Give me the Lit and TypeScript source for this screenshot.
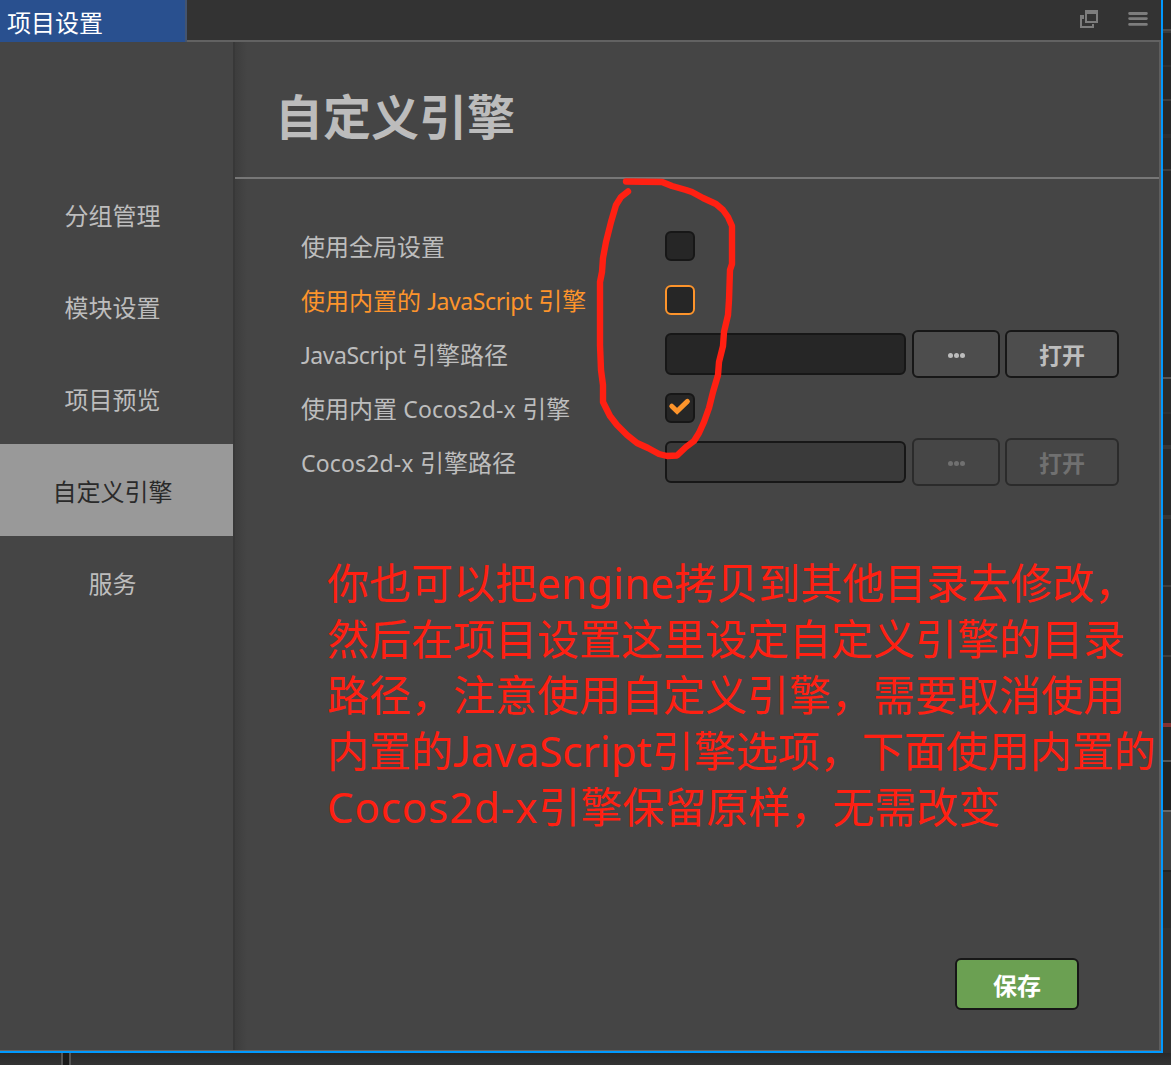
import { LitElement, html, css, svg, nothing } from "lit";
import { customElement, property, state } from "lit/decorators.js";
import { classMap } from "lit/directives/class-map.js";
import { styleMap } from "lit/directives/style-map.js";

const FONT = css`"Noto Sans", "Noto Sans CJK SC", sans-serif`;

@customElement("ui-checkbox")
class UiCheckbox extends LitElement {
  @property({ type: Boolean }) checked = false;
  @property({ type: Boolean }) focused = false;

  static styles = css`
    :host { display: block; width: 30px; height: 30px; }
    .box {
      box-sizing: border-box; width: 30px; height: 30px; display: flex;
      border: 2px solid #171717; border-radius: 6px; background: #262626;
    }
    .focused { border-color: #fd942b; }
    svg { display: block; width: 26px; height: 26px; }
  `;

  render() {
    return html`<div class=${classMap({ box: true, focused: this.focused })}>
      ${this.checked
        ? svg`<svg viewBox="0 0 26 26"><path d="M4.8 11.2 L10.1 16.2 L20.4 6.4" fill="none" stroke="#fd942b" stroke-width="5" stroke-linecap="round"/></svg>`
        : nothing}
    </div>`;
  }
}

@customElement("ui-button")
class UiButton extends LitElement {
  @property({ type: Boolean }) disabled = false;
  @property() tone = "";

  static styles = css`
    :host { display: block; }
    .btn {
      box-sizing: border-box; width: 100%; height: 100%; margin: 0; padding: 1px 0 0;
      display: flex; align-items: center; justify-content: center;
      border: 2px solid #171717; border-radius: 6px; background: #4d4d4d; color: #bdbdbd;
      font: bold 23px/1 "Noto Sans CJK SC", sans-serif;
    }
    .green { background: #6ba052; color: #fff; font-size: 24px; }
    .off { border-color: #2b2b2b; background: #464646; color: #707070; }
  `;

  render() {
    return html`<button class=${classMap({ btn: true, off: this.disabled, green: this.tone === "green" })}>
      <slot></slot>
    </button>`;
  }
}

type Row = { label: unknown; kind: "check" | "path"; on?: boolean; active?: boolean; disabled?: boolean };

const JS = html`<span class="js"><span class="j">J</span>avaScript</span>`;
const COCOS = html`<span class="cc">Cocos2d-x</span>`;

@customElement("app-root")
class AppRoot extends LitElement {
  @state() private selected = 3;

  private nav = ["分组管理", "模块设置", "项目预览", "自定义引擎", "服务"];

  private rows: Row[] = [
    { label: "使用全局设置", kind: "check" },
    { label: html`使用内置的 ${JS} 引擎`, kind: "check", active: true },
    { label: html`${JS} 引擎路径`, kind: "path" },
    { label: html`使用内置 ${COCOS} 引擎`, kind: "check", on: true },
    { label: html`${COCOS} 引擎路径`, kind: "path", disabled: true },
  ];

  /* Visible edge of the editor panels behind the window: [height, colour]. */
  private edge: [number, string][] = [
    [29, "#272727"], [2, "#4a4a4a"], [2, "#3a3a3a"], [32, "#272727"], [2, "#2f2f2f"], [32, "#272727"], [2, "#3d3d3d"],
    [33, "#272727"], [4, "#2d2d2d"], [31, "#272727"], [2, "#3d3d3d"], [206, "#272727"], [2, "#555"], [33, "#2a2a2a"],
    [2, "#2f2f2f"], [31, "#272727"], [4, "#363636"], [66, "#292929"], [4, "#363636"], [66, "#292929"], [2, "#3d3d3d"],
    [68, "#292929"], [2, "#3d3d3d"], [66, "#292929"], [4, "#853232"], [33, "#282828"], [2, "#555"], [48, "#212121"],
    [2, "#666"], [58, "#404040"], [2, "#222"], [56, "#2c2c2c"], [137, "#303030"],
  ];

  static styles = css`
    :host {
      display: grid; grid-template-columns: 1163px 8px; grid-template-rows: 1053px 12px;
      width: 1171px; height: 1065px; overflow: hidden; position: relative;
      background: #303030; font-family: ${FONT};
    }
    * { box-sizing: border-box; }
    .window {
      display: flex; flex-direction: column; background: #454545;
      border-right: 2px solid #0099ff; border-bottom: 2px solid #0099ff;
    }
    .head { display: flex; height: 42px; flex: none; }
    .tab {
      width: 187px; padding: 8px 0 0 7px; background: #29508f; border-right: 2px solid #44546f;
      color: #fff; font-size: 24px; line-height: 30px; white-space: nowrap;
    }
    .tools {
      flex: 1; display: flex; justify-content: flex-end; gap: 29px; padding: 9px 13px 0 0;
      background: #333; border-bottom: 2px solid #626262;
    }
    .tools svg { width: 20px; height: 20px; display: block; }
    .body { flex: 1; display: flex; border-right: 2px solid #5e5e5e; border-bottom: 1px solid #666; }
    .side { width: 235px; flex: none; padding-top: 126px; border-right: 2px solid #383838; }
    .item {
      height: 92px; padding: 0 8px 0 0; display: flex; align-items: center; justify-content: center;
      font-size: 24px; color: #bdbdbd;
    }
    .item.on { background: #999; color: #2a2a2a; }
    .main {
      flex: 1; display: flex; flex-direction: column;
      background: linear-gradient(90deg, #3d3d3d, #454545 12px);
    }
    h1 {
      margin: 0; height: 137px; padding: 37px 0 0 40px; border-bottom: 2px solid #777;
      font: bold 48px/70px "Noto Sans CJK SC", sans-serif; color: #bcbcbc;
    }
    .form { padding: 40px 0 0 66px; }
    .row { display: flex; align-items: center; height: 54px; }
    .label { width: 364px; flex: none; padding-top: 2px; font-size: 24px; line-height: 34px; color: #bdbdbd; white-space: nowrap; }
    .active { color: #fd942b; }
    .field { width: 241px; height: 42px; border: 2px solid #171717; border-radius: 6px; background: #262626; }
    .field.off { background: #3a3a3a; }
    .more { width: 88px; height: 48px; margin-left: 6px; }
    .open { width: 114px; height: 48px; margin-left: 5px; }
    .dots { display: flex; gap: 1px; padding-top: 2px; }
    .dots i { width: 5px; height: 5px; border-radius: 50%; background: currentColor; }
    .js, .cc { font-size: 23px; }
    .js { letter-spacing: -0.4px; }
    .j { font-family: Lato, sans-serif; }
    .cc { letter-spacing: 0.15px; }
    .note { margin: 66px 0 0 92px; font-size: 42px; line-height: 56px; color: #ff2012; white-space: nowrap; }
    .note div { height: 56px; }
    .note .js, .note .cc { font-size: 42px; letter-spacing: 0; }
    .note .cc { letter-spacing: 0.9px; }
    .note .en { letter-spacing: 0.2px; }
    .foot { margin-top: auto; padding: 0 80px 40px 0; display: flex; justify-content: flex-end; }
    .save { width: 124px; height: 52px; }
    .edge { display: flex; flex-direction: column; }
    .below { grid-column: 1 / 3; display: flex; background: linear-gradient(#292929, #333); }
    .split { width: 10px; margin-left: 61px; background: #1a1a1a; border: solid #555; border-width: 0 2px; }
    .mark { position: absolute; left: 590px; top: 170px; width: 150px; height: 296px; pointer-events: none; }
  `;

  private renderRow(r: Row) {
    return html`<div class="row">
      <div class=${classMap({ label: true, active: !!r.active })}>${r.label}</div>
      ${r.kind === "check"
        ? html`<ui-checkbox ?checked=${r.on} ?focused=${r.active}></ui-checkbox>`
        : html`<div class=${classMap({ field: true, off: !!r.disabled })}></div>
            <ui-button class="more" ?disabled=${r.disabled}><span class="dots"><i></i><i></i><i></i></span></ui-button>
            <ui-button class="open" ?disabled=${r.disabled}>打开</ui-button>`}
    </div>`;
  }

  render() {
    return html`
      <div class="window">
        <div class="head">
          <div class="tab">项目设置</div>
          <div class="tools">
            <svg viewBox="0 0 20 20"><path fill-rule="evenodd" fill="#7d7d7d" d="M6 1H19V14H6ZM8 5V12H17V5ZM1 6H5V10H3V17H13V15H15V19H1Z"/></svg>
            <svg viewBox="0 0 20 20"><path d="M1.6 4.5h16.8M1.6 9.6h16.8M1.6 15.4h16.8" stroke="#7d7d7d" stroke-width="2.8" stroke-linecap="round"/></svg>
          </div>
        </div>
        <div class="body">
          <div class="side">
            ${this.nav.map((n, i) => html`<div class=${classMap({ item: true, on: i === this.selected })} @click=${() => (this.selected = i)}>${n}</div>`)}
          </div>
          <div class="main">
            <h1>自定义引擎</h1>
            <div class="form">${this.rows.map((r) => this.renderRow(r))}</div>
            <div class="note">
              <div>你也可以把<span class="en">engine</span>拷贝到其他目录去修改，</div>
              <div>然后在项目设置这里设定自定义引擎的目录</div>
              <div>路径，注意使用自定义引擎，需要取消使用</div>
              <div>内置的${JS}引擎选项，下面使用内置的</div>
              <div>${COCOS}引擎保留原样，无需改变</div>
            </div>
            <div class="foot"><ui-button class="save" tone="green">保存</ui-button></div>
          </div>
        </div>
      </div>
      <div class="edge">
        ${this.edge.map(([h, c]) => html`<div style=${styleMap({ height: `${h}px`, background: c, flex: "none" })}></div>`)}
      </div>
      <div class="below"><div class="split"></div></div>
      <svg class="mark" viewBox="590 170 150 296">
        <path d="M626 181.5 L662 182 L672 186 L679 188 L686 190 L692 192 L703 198 L716 204 L723 210 L728 217 L732 226 L732 264 L730 270 L729 300 L728 315 L724 332 L723 346 L719 362 L718 375 L713 392 L709 408 L704 422 L699 433 L694 441 L686 447 L677 455.5 L667 456 L659 454 L648 448 L637 443 L627 435 L617 425 L610 416 L603 402 L603 385 L601 370 L600 345 L600 282 L602 272 L603 258 L606 242 L611 222 L616 205 L621 197 L628 191.5" fill="none" stroke="#ff2012" stroke-width="6.4" stroke-linejoin="round" stroke-linecap="round"/>
      </svg>`;
  }
}
